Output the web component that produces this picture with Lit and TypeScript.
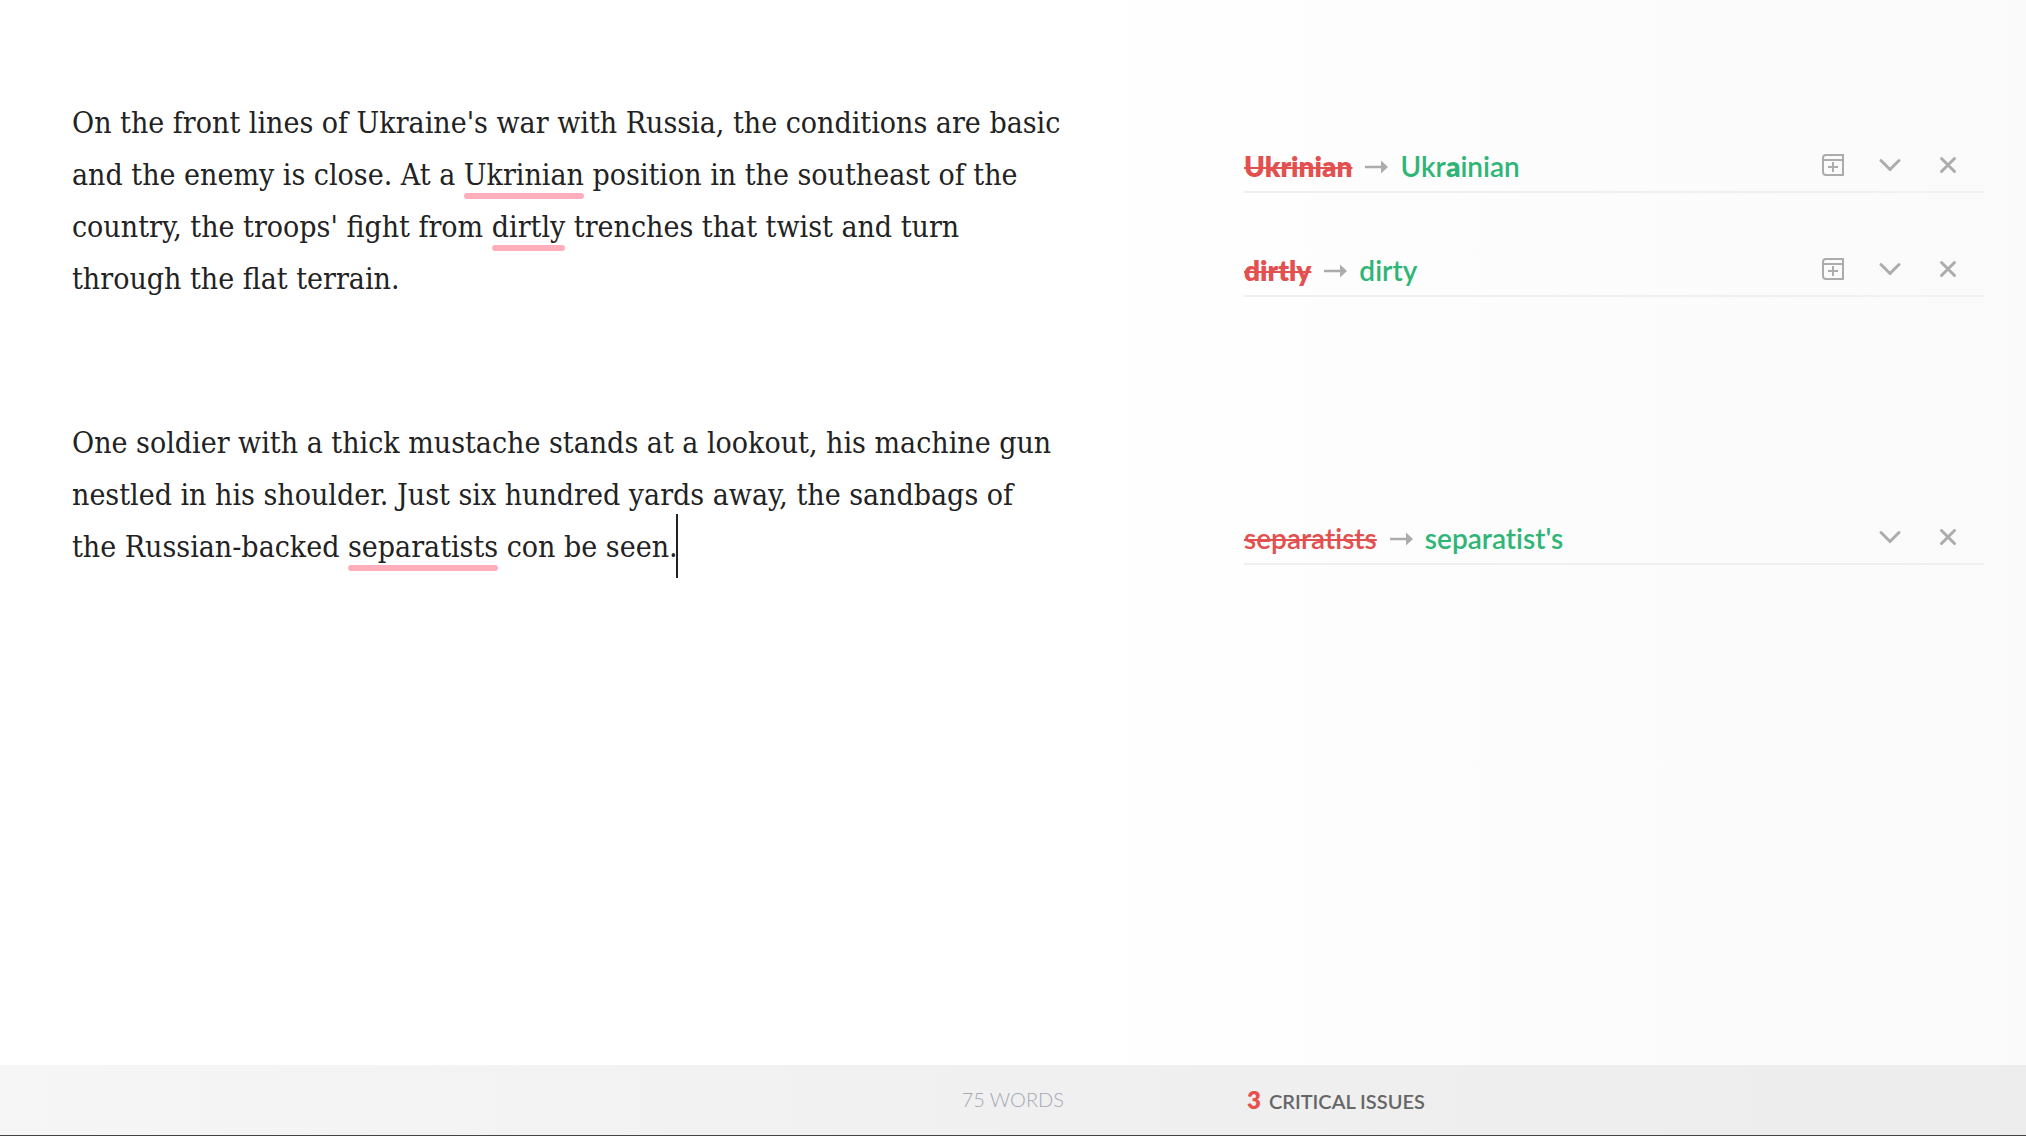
import { LitElement, html, css, nothing } from "lit";
import { customElement, property, state } from "lit/decorators.js";

type Part = { text: string; bold?: boolean };
type Issue = { wrong: string; strong: boolean; fix: Part[]; canAdd: boolean };

const GROUPS: Issue[][] = [
  [
    {
      wrong: "Ukrinian",
      strong: true,
      fix: [{ text: "Ukr" }, { text: "a", bold: true }, { text: "inian" }],
      canAdd: true,
    },
    { wrong: "dirtly", strong: true, fix: [{ text: "dirty" }], canAdd: true },
  ],
  [{ wrong: "separatists", strong: false, fix: [{ text: "separatist's" }], canAdd: false }],
];

@customElement("issue-card")
export class IssueCard extends LitElement {
  @property({ attribute: false }) issue!: Issue;

  static styles = css`
    :host {
      display: flex;
      align-items: center;
      box-sizing: border-box;
      height: 52px;
      border-bottom: 2px solid #f0f0f0;
      font-size: 28px;
      line-height: 50px;
      font-weight: 600;
      font-variant-ligatures: no-common-ligatures;
      white-space: nowrap;
    }
    .wrong {
      color: #e2504f;
      text-decoration: line-through;
      text-decoration-thickness: 2px;
      text-decoration-skip-ink: none;
    }
    .strong {
      font-weight: 800;
    }
    .arrow {
      width: 24px;
      height: 14px;
      margin: 2px 12px 0;
      fill: #acacac;
    }
    .fix {
      padding: 0;
      border: 0;
      background: none;
      font: inherit;
      font-variant-ligatures: inherit;
      color: #2fb576;
      cursor: pointer;
    }
    .fix b {
      font-weight: 800;
    }
    .actions {
      display: flex;
      gap: 26px;
      margin-left: auto;
      padding: 0 20px 2px 0;
    }
    .action {
      display: flex;
      padding: 0;
      border: 0;
      background: none;
      cursor: pointer;
    }
    .action svg {
      width: 32px;
      height: 32px;
      fill: none;
      stroke: #acacac;
      stroke-width: 3;
      stroke-linecap: round;
    }
    .action .thin {
      stroke-width: 2;
      stroke-linecap: butt;
    }
  `;

  render() {
    const { wrong, strong, fix, canAdd } = this.issue;
    return html`
      <del class="wrong ${strong ? "strong" : ""}">${wrong}</del>
      <svg class="arrow" viewBox="0 0 24 14" aria-hidden="true">
        <path d="M1 5.700h16V0.500l7 6.500-7 6.500V8.300H1z" />
      </svg>
      <button class="fix" type="button">${fix.map((p) => (p.bold ? html`<b>${p.text}</b>` : p.text))}</button>
      <div class="actions">
        ${canAdd
          ? html`<button class="action" type="button" aria-label="Add to dictionary">
              <svg class="thin" viewBox="0 0 32 32">
                <path d="M10 6h17v20H10q-3 0-3-3V9q0-3 3-3zM7 11h20M17 13v10M12 18h10" />
              </svg>
            </button>`
          : nothing}
        <button class="action" type="button" aria-label="Show details">
          <svg viewBox="0 0 32 32"><path d="M7 11.500l9 9 9-9" /></svg>
        </button>
        <button class="action" type="button" aria-label="Dismiss">
          <svg viewBox="0 0 32 32"><path d="M9.500 9.500l13 13M22.500 9.500l-13 13" /></svg>
        </button>
      </div>
    `;
  }
}

@customElement("app-root")
export class AppRoot extends LitElement {
  @state() private words = 75;

  static styles = css`
    :host {
      display: flex;
      flex-direction: column;
      box-sizing: border-box;
      min-height: 100vh;
      border-bottom: 1px solid #444;
      background: linear-gradient(90deg, #fff 50%, #fafafa);
      font-family: Lato, "Liberation Sans", sans-serif;
    }
    .page,
    .status {
      display: grid;
      grid-template-columns: minmax(0, 1202fr) minmax(0, 740fr);
      padding: 0 42px;
    }
    .page {
      flex: 1;
      align-items: start;
    }
    .editor {
      padding: 97px 0 0 30px;
      outline: none;
      color: #222;
      font-family: "DejaVu Serif Condensed", "DejaVu Serif", serif;
      font-size: 30px;
      line-height: 52px;
      white-space: nowrap;
    }
    .paragraph {
      margin: 0 0 112px;
    }
    .mark {
      position: relative;
    }
    .mark::after {
      content: "";
      position: absolute;
      left: 0;
      right: 0;
      bottom: -7px;
      height: 6px;
      border-radius: 3px;
      background: #ffafbb;
    }
    .caret {
      display: inline-block;
      width: 2px;
      height: 64px;
      margin: -10px 0 -4px -2px;
      vertical-align: middle;
      background: #222;
    }
    .issues {
      display: flex;
      flex-direction: column;
      gap: 216px;
      padding-top: 141px;
    }
    .group {
      display: flex;
      flex-direction: column;
      gap: 52px;
    }
    .status {
      height: 70px;
      background: linear-gradient(90deg, #f6f6f6, #f0f0f0 50%, #ededed);
      font-size: 20px;
      line-height: 70px;
      white-space: nowrap;
    }
    .words {
      padding-right: 180px;
      text-align: right;
      font-weight: 300;
      line-height: 68px;
      color: #a5a9b4;
    }
    .critical {
      display: flex;
      align-items: baseline;
      gap: 8px;
      padding-left: 3px;
      font-weight: 600;
      color: #666;
    }
    .count {
      font-size: 24px;
      font-weight: 800;
      color: #e9514e;
    }
  `;

  render() {
    return html`
      <main class="page">
        <div
          class="editor"
          role="textbox"
          aria-multiline="true"
          aria-label="Document"
          contenteditable="true"
          spellcheck="false"
        >
          <p class="paragraph">
            On the front lines of Ukraine's war with Russia, the conditions are basic<br />
            and the enemy is close. At a <span class="mark">Ukrinian</span> position in the southeast of the<br />
            country, the troops' fight from <span class="mark">dirtly</span> trenches that twist and turn<br />
            through the flat terrain.
          </p>
          <p class="paragraph">
            One soldier with a thick mustache stands at a lookout, his machine gun<br />
            nestled in his shoulder. Just six hundred yards away, the sandbags of<br />
            the Russian-backed <span class="mark">separatists</span> con be seen.<span class="caret"></span>
          </p>
        </div>
        <aside class="issues" aria-label="Suggestions">
          ${GROUPS.map(
            (group) => html`<div class="group">
              ${group.map((issue) => html`<issue-card .issue=${issue}></issue-card>`)}
            </div>`
          )}
        </aside>
      </main>
      <footer class="status">
        <div class="words">${this.words} WORDS</div>
        <div class="critical"><span class="count">${GROUPS.flat().length}</span><span>CRITICAL ISSUES</span></div>
      </footer>
    `;
  }
}
